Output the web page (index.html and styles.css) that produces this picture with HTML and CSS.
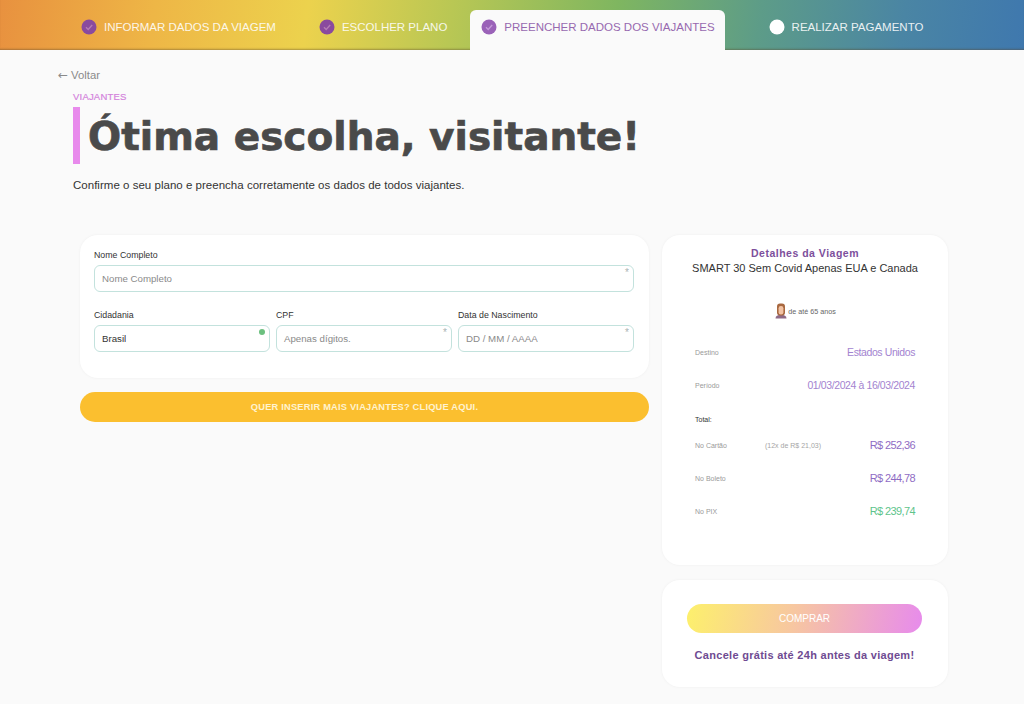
FILE: index.html
```html
<!DOCTYPE html>
<html lang="pt-BR">
<head>
<meta charset="utf-8">
<title>Viajantes</title>
<link rel="stylesheet" href="styles.css">
</head>
<body>
<nav class="steps">
  <div class="step step-1"><svg class="dot" viewBox="0 0 16 16"><circle cx="8" cy="8" r="7.5" fill="#8a4a9e"/><path d="M5 8.2l2.2 2.2L11.2 6" fill="none" stroke="#b57cb4" stroke-width="1.4"/></svg><span>INFORMAR DADOS DA VIAGEM</span></div>
  <div class="step step-2"><svg class="dot" viewBox="0 0 16 16"><circle cx="8" cy="8" r="7.5" fill="#8a4a9e"/><path d="M5 8.2l2.2 2.2L11.2 6" fill="none" stroke="#b57cb4" stroke-width="1.4"/></svg><span>ESCOLHER PLANO</span></div>
  <div class="step step-3 active"><svg class="dot" viewBox="0 0 16 16"><circle cx="8" cy="8" r="7.5" fill="#9a62b8"/><path d="M5 8.2l2.2 2.2L11.2 6" fill="none" stroke="#c49ad8" stroke-width="1.4"/></svg><span>PREENCHER DADOS DOS VIAJANTES</span></div>
  <div class="step step-4"><svg class="dot" viewBox="0 0 16 16"><circle cx="8" cy="8" r="7.5" fill="#fff"/></svg><span>REALIZAR PAGAMENTO</span></div>
</nav>
<main class="page">
  <a class="back"><span class="arrow">←</span><span>Voltar</span></a>
  <header class="head">
    <div class="eyebrow">VIAJANTES</div>
    <h1 class="title">Ótima escolha, visitante!</h1>
    <p class="lead">Confirme o seu plano e preencha corretamente os dados de todos viajantes.</p>
  </header>
  <div class="columns">
    <section class="left">
      <form class="card form-card">
        <div class="field">
          <label>Nome Completo</label>
          <div class="input placeholder">Nome Completo<i class="req">*</i></div>
        </div>
        <div class="row">
          <div class="field">
            <label>Cidadania</label>
            <div class="input">Brasil<i class="ok"></i></div>
          </div>
          <div class="field">
            <label>CPF</label>
            <div class="input placeholder">Apenas dígitos.<i class="req">*</i></div>
          </div>
          <div class="field">
            <label>Data de Nascimento</label>
            <div class="input placeholder">DD / MM / AAAA<i class="req">*</i></div>
          </div>
        </div>
      </form>
      <button class="more" type="button">QUER INSERIR MAIS VIAJANTES? CLIQUE AQUI.</button>
    </section>
    <aside class="right">
      <section class="card details">
        <h2>Detalhes da Viagem</h2>
        <div class="plan">SMART 30 Sem Covid Apenas EUA e Canada</div>
        <div class="age">
          <svg class="person" viewBox="0 0 14 16"><path d="M1.5 15.5c0-2.6 2-3.8 5.5-3.8s5.500 1.200 5.500 3.800z" fill="#8f6a86"/><rect x="3" y=".6" width="8" height="12" rx="3" fill="#a8683f"/><rect x="4.600" y="3" width="4.800" height="8.400" rx="2.200" fill="#f3c3a4"/></svg>
          <span>de até 65 anos</span>
        </div>
        <div class="line first"><span class="k">Destino</span><span class="v">Estados Unidos</span></div>
        <div class="line"><span class="k">Período</span><span class="v">01/03/2024 à 16/03/2024</span></div>
        <div class="total">Total:</div>
        <div class="line price"><span class="k">No Cartão</span><span class="inst">(12x de R$ 21,03)</span><span class="v">R$ 252,36</span></div>
        <div class="line price"><span class="k">No Boleto</span><span class="v">R$ 244,78</span></div>
        <div class="line price"><span class="k">No PIX</span><span class="v green">R$ 239,74</span></div>
      </section>
      <section class="card buy">
        <button class="comprar" type="button">COMPRAR</button>
        <p class="cancel">Cancele grátis até 24h antes da viagem!</p>
      </section>
    </aside>
  </div>
</main>
</body>
</html>
```
FILE: styles.css
```css
* { box-sizing: border-box; }
html, body { margin: 0; height: 704px; overflow: hidden; }
body { background: #fafafa; font-family: "Liberation Sans", Arial, sans-serif; color: #333; }

.steps {
  display: flex;
  align-items: flex-end;
  height: 50px;
  padding-left: 70px;
  background: linear-gradient(97deg, #e8913f 0%, #eeb646 15%, #ecd24d 30%, #b9c754 44%, #7fb660 60%, #5d9c88 74%, #4a85a4 88%, #3f78ae 100%);
  box-shadow: inset 0 -2px 2px -1px rgba(90, 70, 40, .45);
}
.step {
  display: flex;
  align-items: center;
  gap: 7px;
  height: 40px;
  padding: 0 11px 7px;
  font-size: 11.5px;
  color: #fff;
  white-space: nowrap;
}
.step span { opacity: .88; }
.step-2 { margin-left: 21px; }
.step-3 { margin-left: 12px; padding-right: 10px; }
.step-4 { margin-left: 33px; }
.step.active {
  background: #fafafa;
  color: #8a55a6;
  border-radius: 6px 6px 0 0;
}
.dot { width: 16px; height: 16px; flex: none; }

.page { padding: 17px 76px 0 58px; }
.back { display: flex; gap: 3px; font-size: 11.3px; line-height: 16px; color: #8a8a8a; }
.arrow { font-family: "DejaVu Sans", sans-serif; font-size: 12px; }
.head { padding-left: 15px; margin-top: 8px; }
.eyebrow { font-size: 9.5px; line-height: 12px; letter-spacing: .2px; color: #d483dc; -webkit-text-stroke: .2px #d483dc; }
.title {
  margin: 4px 0 0;
  height: 57px;
  padding: 1px 0 0 8px;
  border-left: 7px solid #e88aec;
  font-family: "DejaVu Sans", sans-serif;
  font-size: 39px;
  line-height: 57px;
  font-weight: 700;
  -webkit-text-stroke: .7px #4a4a4a;
  color: #4a4a4a;
  white-space: nowrap;
}
.lead { margin: 13px 0 0; font-size: 11.5px; line-height: 16px; letter-spacing: .02px; color: #333; }

.columns {
  display: grid;
  grid-template-columns: 569px 286px;
  gap: 13px;
  margin: 42px 0 0 22px;
}
.card {
  background: #fff;
  border-radius: 18px;
  box-shadow: 0 0 3px rgba(0, 0, 0, .05);
}
.form-card { height: 143px; padding: 15px 15px 0 14px; display: flex; flex-direction: column; gap: 18px; }
.field { display: flex; flex-direction: column; gap: 4px; min-width: 0; }
.row { display: grid; grid-template-columns: 176px 176px 176px; gap: 6px; }
.field label { font-size: 8.8px; line-height: 11px; color: #333; }
.input {
  position: relative;
  height: 27px;
  padding-left: 7px;
  border: 1px solid #c3e2dd;
  border-radius: 6px;
  font-size: 9.7px;
  line-height: 25px;
  color: #333;
  background: #fff;
}
.placeholder { color: #8a8a8a; }
.req { position: absolute; top: 1px; right: 4px; font-style: normal; font-size: 10px; line-height: 12px; color: #aab4b4; }
.ok { position: absolute; top: 3px; right: 4px; width: 6px; height: 6px; border-radius: 50%; background: #6cc07f; }
.more {
  display: block;
  width: 100%;
  height: 30px;
  margin-top: 14px;
  padding: 0;
  border: 0;
  border-radius: 15px;
  background: #fbbf2f;
  color: #fff3d0;
  font: 700 9.3px "Liberation Sans", Arial, sans-serif;
  letter-spacing: .2px;
}

.right { display: flex; flex-direction: column; gap: 15px; }
.details { height: 330px; padding: 12px 33px 0; }
.details h2 { margin: 0; text-align: center; font-size: 10.5px; line-height: 12px; font-weight: 700; letter-spacing: .5px; color: #7d4f9c; }
.plan { margin: 2px -8px 0; text-align: center; font-size: 11px; line-height: 14px; color: #333; white-space: nowrap; }
.age { display: flex; justify-content: center; align-items: center; gap: 0; margin-top: 28px; height: 16px; font-size: 7.2px; color: #666; }
.person { width: 14px; height: 16px; }
.line { display: flex; justify-content: space-between; align-items: center; height: 16px; margin-top: 17px; }
.line.first { margin-top: 25px; }
.k { font-size: 7px; color: #9a9a9a; }
.v { font-size: 10.5px; letter-spacing: -.4px; color: #a383d0; }
.total { margin-top: 22px; font-size: 7px; line-height: 9px; color: #333; }
.price { position: relative; }
.price .v { font-size: 11px; letter-spacing: -.6px; color: #8f6cc4; }
.price .v.green { color: #5ec48b; }
.inst { position: absolute; left: 70px; font-size: 7px; color: #a5a5a5; }
.total + .price { margin-top: 13px; }

.buy { height: 107px; padding: 24px 26px 0 25px; }
.comprar {
  display: block;
  width: 100%;
  height: 29px;
  border: 0;
  border-radius: 15px;
  background: linear-gradient(100deg, #fdf06c 0%, #f7c7a0 45%, #e78bec 100%);
  color: #fff;
  font: 10px "Liberation Sans", Arial, sans-serif;
}
.cancel { margin: 15px 0 0; text-align: center; font-size: 11px; line-height: 14px; font-weight: 700; letter-spacing: .29px; color: #6f4b92; white-space: nowrap; }
```
